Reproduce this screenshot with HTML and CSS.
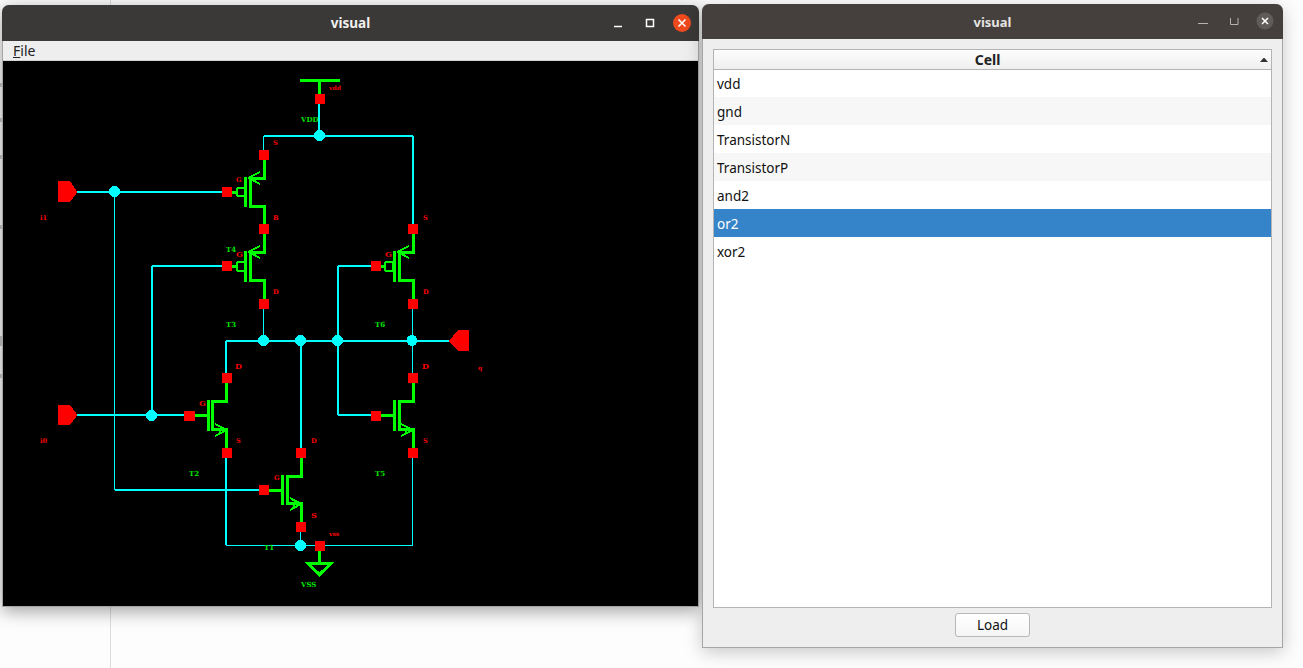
FILE: index.html
```html
<!DOCTYPE html>
<html lang="en">
<head>
<meta charset="utf-8">
<title>visual</title>
<link rel="stylesheet" href="styles.css">
</head>
<body>
<div class="desktop">
  <div class="backdrop">
    <span class="mark mark-a"></span><span class="mark mark-b"></span><span class="mark mark-c"></span>
    <span class="mark mark-d"></span><span class="mark mark-e"></span><span class="mark mark-f"></span>
  </div>

  <section class="window editor">
    <header class="titlebar titlebar-focus">
      <h1 class="title">visual</h1>
      <div class="controls">
        <svg class="ctl" width="16" height="16" viewBox="0 0 16 16"><path class="glyph-w" d="M4 11.5h8"/></svg>
        <svg class="ctl" width="16" height="16" viewBox="0 0 16 16"><rect class="glyph-w" x="5.5" y="4.5" width="7" height="7"/></svg>
        <svg class="ctl" width="20" height="20" viewBox="0 0 20 20"><circle class="close-on" cx="10" cy="10" r="9"/><path class="glyph-x" d="M6.5 6.5l7 7M13.5 6.5l-7 7"/></svg>
      </div>
    </header>
    <nav class="menubar"><span class="menu-item"><u>F</u>ile</span></nav>
    <div class="canvas">
      <svg class="schematic" width="695" height="545" viewBox="3 61 695 545">
        <!-- cyan wires -->
        <path class="w2" d="M319 104V135M264 136H413M413 136V224M75 192H222M152 266H222M152 266V415M75 415H184M226 341H450M226 341V373M226 458V545M301 341V448M338 266H371M338 266V415M338 415H371M115 490H259"/>
        <path class="w1" d="M263.500 136V150M114.500 192V490M263.500 309V341M412.500 309V373M226 545.500H413M412.500 458V545M300.500 532V545"/>
        <!-- cyan junctions -->
        <circle class="dot" cx="319.5" cy="135.5" r="5.5"/>
        <circle class="dot" cx="114.5" cy="191.5" r="5.5"/>
        <circle class="dot" cx="263.5" cy="340.5" r="5.5"/>
        <circle class="dot" cx="300.5" cy="340.5" r="5.5"/>
        <circle class="dot" cx="337.5" cy="340.5" r="5.5"/>
        <circle class="dot" cx="412" cy="340.5" r="5.5"/>
        <circle class="dot" cx="151.5" cy="415.5" r="5.5"/>
        <circle class="dot" cx="300.5" cy="545.5" r="5.5"/>
        <!-- green symbols -->
        <path class="g3" d="M300 80.5H340M319.5 80V94"/>
        <path class="g3" d="M264.5 160V178.5H250V206H264.5V224"/>
        <path class="g3" d="M245.500 177V207M231 192H236"/>
        <path class="g2" d="M248 178L260 172M248 178L260 184M252 177L256 180"/>
        <rect class="ring" x="237" y="188" width="8" height="8" rx="2"/>
        <path class="g3" d="M264.500 234V252.500H250V280.500H264.500V299"/>
        <path class="g3" d="M245.500 251V282M231 266H236"/>
        <path class="g2" d="M248 252L260 246M248 252L260 258M252 251L256 254"/>
        <rect class="ring" x="237" y="262" width="8" height="9" rx="2"/>
        <path class="g3" d="M413 234V252.500H399V280.500H413V299"/>
        <path class="g3" d="M394.500 251V282M380 266.500H385"/>
        <path class="g2" d="M397 252L409 246M397 252L409 258M401 251L405 254"/>
        <rect class="ring" x="385" y="262" width="8" height="9" rx="2"/>
        <path class="g3" d="M226.500 383V401.500H212.500V429.500H226.500V448"/>
        <path class="g3" d="M208 400V431M195 415.500H208"/>
        <path class="g2" d="M227 430L215 424M227 430L215 436M223 429L219 432"/>
        <path class="g3" d="M413 383V401.500H399.500V429.500H413V448"/>
        <path class="g3" d="M394.500 400V431M381 415.500H394"/>
        <path class="g2" d="M413 430L401 424M413 430L401 436M409 429L405 432"/>
        <path class="g3" d="M301 458V476.500H287.500V503.500H301V522"/>
        <path class="g3" d="M282.500 475V505M269 490.500H282"/>
        <path class="g2" d="M301 504L290 498M301 504L290 510M297 503L293 506"/>
        <path class="g3" d="M319.500 551V563M308 563.500H331L319.500 574.500Z"/>
        <!-- red pins -->
        <path class="pin" d="M58 181H70L77.500 192L70 202H58Z"/>
        <path class="pin" d="M58 405H70L77.500 415L70 425H58Z"/>
        <path class="pin" d="M469 330V351H458L449 341L458 330Z"/>
        <!-- red pads -->
        <rect class="pad" x="315" y="94" width="10" height="10"/>
        <rect class="pad" x="259" y="150" width="10" height="10"/>
        <rect class="pad" x="222" y="187" width="10" height="10"/>
        <rect class="pad" x="259" y="224" width="10" height="10"/>
        <rect class="pad" x="408" y="224" width="10" height="10"/>
        <rect class="pad" x="222" y="261" width="10" height="10"/>
        <rect class="pad" x="371" y="261" width="10" height="10"/>
        <rect class="pad" x="259" y="299" width="10" height="10"/>
        <rect class="pad" x="408" y="299" width="10" height="10"/>
        <rect class="pad" x="222" y="373" width="10" height="10"/>
        <rect class="pad" x="408" y="373" width="10" height="10"/>
        <rect class="pad" x="184" y="411" width="11" height="10"/>
        <rect class="pad" x="371" y="411" width="10" height="10"/>
        <rect class="pad" x="222" y="448" width="10" height="10"/>
        <rect class="pad" x="296" y="448" width="10" height="10"/>
        <rect class="pad" x="408" y="448" width="10" height="10"/>
        <rect class="pad" x="259" y="485" width="10" height="10"/>
        <rect class="pad" x="296" y="522" width="10" height="10"/>
        <rect class="pad" x="315" y="541" width="10" height="10"/>
        <!-- labels -->
        <text class="lg" x="301" y="122">VDD</text>
        <text class="lr sm" x="329" y="90">vdd</text>
        <text class="lr" x="273" y="145">S</text>
        <text class="lr" x="236" y="182">G</text>
        <text class="lr" x="273" y="220">B</text>
        <text class="lg" x="226" y="252">T4</text>
        <text class="lr big" x="236" y="257">G</text>
        <text class="lr" x="40" y="220">i1</text>
        <text class="lr" x="273" y="294">D</text>
        <text class="lg" x="226" y="327">T3</text>
        <text class="lr" x="423" y="220">S</text>
        <text class="lr big" x="385" y="257">G</text>
        <text class="lr" x="423" y="294">D</text>
        <text class="lg" x="375" y="327">T6</text>
        <text class="lr big" x="422" y="369">D</text>
        <text class="lr sm" x="478" y="370">q</text>
        <text class="lr big" x="235" y="369">D</text>
        <text class="lr big" x="199" y="406">G</text>
        <text class="lr" x="236" y="443">S</text>
        <text class="lr" x="40" y="443">i0</text>
        <text class="lg" x="189" y="476">T2</text>
        <text class="lr" x="274" y="480">G</text>
        <text class="lr" x="311" y="443">D</text>
        <text class="lr big" x="311" y="518">S</text>
        <text class="lr" x="423" y="443">S</text>
        <text class="lg" x="375" y="476">T5</text>
        <text class="lr sm" x="329" y="536">vss</text>
        <text class="lg" x="264" y="550">T1</text>
        <text class="lg" x="301" y="587">VSS</text>
      </svg>
    </div>
  </section>

  <section class="window browser">
    <header class="titlebar titlebar-blur">
      <h1 class="title">visual</h1>
      <div class="controls controls-blur">
        <svg class="ctl" width="16" height="16" viewBox="0 0 16 16"><path class="glyph-g" d="M1 10.500h10"/></svg>
        <svg class="ctl" width="16" height="16" viewBox="0 0 16 16"><path class="glyph-g" d="M4.500 5V11.500H12V5"/></svg>
        <svg class="ctl" width="20" height="20" viewBox="0 0 20 20"><circle class="close-off" cx="10" cy="10" r="8.500"/><path class="glyph-x" d="M7 7l6 6M13 7l-6 6"/></svg>
      </div>
    </header>
    <div class="content">
      <div class="table">
        <div class="thead">Cell<svg class="sort" width="8" height="4" viewBox="0 0 8 4"><path d="M0 4L3.500 0H4.500L8 4Z"/></svg></div>
        <ul class="rows">
          <li class="row">vdd</li>
          <li class="row alt">gnd</li>
          <li class="row">TransistorN</li>
          <li class="row alt">TransistorP</li>
          <li class="row">and2</li>
          <li class="row selected">or2</li>
          <li class="row">xor2</li>
        </ul>
      </div>
      <div class="actions"><button class="btn" type="button">Load</button></div>
    </div>
  </section>
</div>
</body>
</html>
```

FILE: styles.css
```css
* { box-sizing: border-box; }
html, body { margin: 0; padding: 0; height: 100%; overflow: hidden; }
body { font-family: "Noto Sans", "Open Sans", sans-serif; background: #fdfdfd; color: #111; }

.desktop { position: relative; width: 1303px; height: 668px; overflow: hidden; }
.backdrop { position: relative; width: 111px; height: 668px; border-right: 1px solid #dcdcdc; }
.mark { position: absolute; left: 0; width: 3px; height: 4px; background: #c8c8c8; }
.mark-a { top: 83px; }
.mark-b { top: 118px; }
.mark-c { top: 155px; }
.mark-d { top: 225px; }
.mark-e { top: 336px; height: 10px; }
.mark-f { top: 374px; }

.window { position: absolute; display: flex; flex-direction: column; border: 1px solid #a6a6a6; border-top: 0; border-radius: 7px 7px 0 0; box-shadow: 0 4px 18px rgba(0, 0, 0, .38); background: #eee; }
.editor { left: 2px; top: 5px; width: 697px; height: 602px; }
.browser { left: 702px; top: 4px; width: 581px; height: 644px; box-shadow: 0 4px 18px rgba(0, 0, 0, .22); }

.titlebar { position: relative; display: flex; align-items: center; justify-content: center; flex: none; padding-top: 1px; border-radius: 7px 7px 0 0; margin: 0 -1px; }
.titlebar-focus { height: 36px; background: #3b3937; }
.titlebar-blur { height: 35px; background: #45403e; }
.title { margin: 0; font-size: 13.500px; font-weight: 700; color: #f2f1f0; line-height: 1; }
.titlebar-blur .title { font-size: 13px; color: #e6e4e2; }

.controls { position: absolute; right: 7px; top: 8px; display: flex; align-items: center; gap: 15px; }
.controls-blur { right: 8px; top: 7px; gap: 13px; }
.ctl { display: block; flex: none; }
.glyph-w { fill: none; stroke: #fff; stroke-width: 1.500; }
.glyph-g { fill: none; stroke: #b5b2b0; stroke-width: 1; }
.glyph-x { fill: none; stroke: #fff; stroke-width: 1.600; }
.close-on { fill: #ee4a1e; }
.close-off { fill: #5f5c5a; }

.menubar { flex: none; height: 20px; background: #eee; border-bottom: 1px solid #d2d2d2; padding-left: 10px; font-size: 14px; line-height: 20px; color: #222; }
.canvas { flex: 1; background: #000; min-height: 0; }
.schematic { display: block; shape-rendering: crispEdges; }

.w1, .w2, .g2, .g3, .ring { fill: none; }
.w1 { stroke: #00ffff; stroke-width: 1; }
.w2 { stroke: #00ffff; stroke-width: 2; }
.g2, .ring { stroke: #00ff00; stroke-width: 2; }
.g3 { stroke: #00ff00; stroke-width: 3; }
.dot { fill: #00ffff; }
.pin, .pad { fill: #ff0000; }
.lg, .lr { font-family: "DejaVu Serif", serif; font-weight: 700; font-size: 6.500px; }
.lg { fill: #00e600; font-size: 7px; }
.lr { fill: #ff0000; }
.big { font-size: 8px; }
.sm { font-size: 6px; }

.content { flex: 1; display: flex; flex-direction: column; min-height: 0; padding: 10px 10px 9px; }
.table { flex: none; height: 559px; background: #fff; border: 1px solid #b4b4b4; }
.thead { position: relative; height: 20px; padding-right: 10px; background: linear-gradient(#fdfdfd, #efefef); border-bottom: 1px solid #b4b4b4; text-align: center; font-size: 14px; font-weight: 700; line-height: 19px; color: #222; }
.sort { position: absolute; right: 3px; top: 8px; fill: #333; }
.rows { list-style: none; margin: -1px 0 0; padding: 0; }
.row { height: 28px; line-height: 30px; padding-left: 3px; font-size: 13.500px; color: #111; background: #fff; }
.alt { background: #f7f7f7; }
.selected { background: #3584c9; color: #fff; }

.actions { flex: 1; display: flex; align-items: flex-start; justify-content: center; padding-top: 5px; }
.btn { width: 75px; height: 24px; padding: 0; border: 1px solid #b8b8b8; border-radius: 3px; background: linear-gradient(#fff, #f5f5f5); font-family: inherit; font-size: 13.500px; line-height: 20px; color: #111; }
```
